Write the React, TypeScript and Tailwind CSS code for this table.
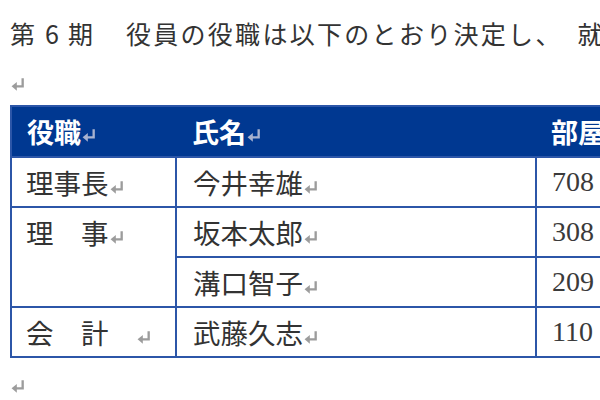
import React from 'react';

const jp = { fontFamily: '"Noto Sans CJK JP", "Noto Sans", sans-serif' };

// Word style paragraph mark
function Ret({ light, size = 14 }: { light?: boolean; size?: number }) {
    return (
        <svg
            width={size}
            height={size}
            viewBox="0 0 12 12"
            className={`inline-block align-middle ml-[1px] ${light ? 'text-[#a7b2d0]' : 'text-[#9c9c9c]'}`}
        >
            <path d="M10 1 V8 H4" fill="none" stroke="currentColor" strokeWidth="2" />
            <path d="M0.5 8 L5 4.2 L5 11.8 Z" fill="currentColor" />
        </svg>
    );
}

const rows = [
    { role: '理事長', name: '今井幸雄', room: '708', span: 1 },
    { role: '理　事', name: '坂本太郎', room: '308', span: 2 },
    { role: null, name: '溝口智子', room: '209', span: 0 },
    { role: '会　計　', name: '武藤久志', room: '110', span: 1 },
];

export default function App() {
    return (
        <div className="w-[600px] h-[400px] overflow-hidden bg-white text-[#333]" style={jp}>
            <div className="pl-[10px] pt-[18px] h-[48px] text-[25px] leading-[30px] whitespace-nowrap">
                <span>第</span>
                <span className="ml-[10px]">6</span>
                <span className="ml-[9px]">期</span>
                <span className="ml-[33px] tracking-[2.3px]">役員の役職は以下のとおり決定し、　就任しました。</span>
            </div>
            <div className="pl-[10px] mt-[24px] h-[24px] flex items-center">
                <Ret size={14} />
            </div>
            <div className="pl-[10px] mt-[9px]">
                <table className="border-collapse table-fixed w-[700px]">
                    <colgroup>
                        <col className="w-[165px]" />
                        <col className="w-[360px]" />
                        <col className="w-[175px]" />
                    </colgroup>
                    <thead>
                        <tr className="h-[51px] bg-[#003891] text-white text-[27px] leading-[32px]">
                            <th className="text-left font-bold pl-[15px] border-2 border-[#2c56a8] border-r-0">役職<Ret light /></th>
                            <th className="text-left font-bold pl-[16px] border-y-2 border-[#2c56a8]">氏名<Ret light /></th>
                            <th className="text-left font-bold pl-[15px] border-y-2 border-[#2c56a8]">部屋番号<Ret light /></th>
                        </tr>
                    </thead>
                    <tbody className="text-[27.5px]">
                        {rows.map((r, i) => (
                            <tr key={i} className="h-[50px]">
                                {r.span > 0 && (
                                    <td
                                        rowSpan={r.span}
                                        className="align-top pl-[14px] pt-[8px] border-2 border-[#2c56a8] leading-[32px]"
                                    >
                                        {r.role}<Ret />
                                    </td>
                                )}
                                <td className="pl-[16px] border-2 border-[#2c56a8] leading-[32px]">
                                    {r.name}<Ret />
                                </td>
                                <td
                                    className="pl-[15px] border-2 border-[#2c56a8] text-[28px] leading-[32px] text-[#3a3a3a]"
                                    style={{ fontFamily: '"Liberation Serif", serif' }}
                                >
                                    {r.room}
                                </td>
                            </tr>
                        ))}
                    </tbody>
                </table>
            </div>
            <div className="pl-[10px] mt-[16px] h-[24px] flex items-center">
                <Ret size={14} />
            </div>
        </div>
    );
}
